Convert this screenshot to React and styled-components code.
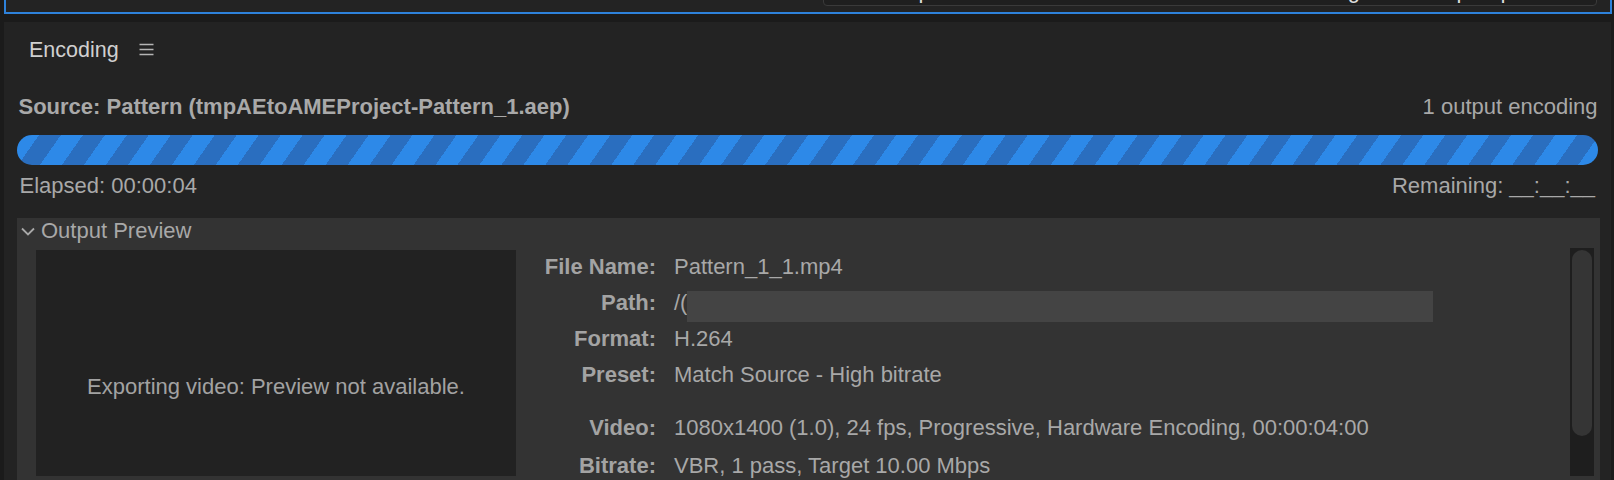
import React from 'react'
import styled, { createGlobalStyle } from 'styled-components'


const GlobalStyle = createGlobalStyle`
    html, body {
        margin: 0;
        padding: 0;
        background: #1b1b1b;
    }
    body {
        font-family: "Liberation Sans", Arial, sans-serif;
        overflow: hidden;
    }
`


const Screen = styled.div`
    width: 1614px;
    height: 480px;
    overflow: hidden;
    display: flex;
    flex-direction: column;
    gap: 8px;
`


const TopPanel = styled.div`
    flex: none;
    box-sizing: border-box;
    height: 14px;
    margin: 0 2px 0 4px;
    border: 2px solid #2e82db;
    border-top: none;
    background: #232323;
    display: flex;
    justify-content: flex-end;
    align-items: flex-end;
    padding: 0 13px 6px 0;
    overflow: hidden;
`


const PathInput = styled.div`
    flex: none;
    width: 774px;
    height: 32px;
    box-sizing: border-box;
    border: 1px solid #3a3a3a;
    border-radius: 4px;
    background: #1f1f1f;
    color: #dcdcdc;
    font-size: 22px;
    line-height: 26px;
    padding: 0 10px 1.5px 70px;
    display: flex;
    align-items: flex-end;
    white-space: nowrap;
`


const Panel = styled.div`
    flex: 1;
    min-height: 0;
    margin: 0 3px 0 4px;
    background: #232323;
    padding: 0 11px 0 12.5px;
    display: flex;
    flex-direction: column;
`


const Header = styled.div`
    flex: none;
    height: 55px;
    padding-left: 12.5px;
    display: flex;
    align-items: center;
    gap: 20px;
`


const Title = styled.span`
    font-size: 21.5px;
    line-height: 26px;
    color: #d0d0d0;
`


const InfoRow = styled.div`
    flex: none;
    display: flex;
    justify-content: space-between;
    align-items: center;
    margin-top: ${p => p.$top}px;
    padding: ${p => p.$pad};
    font-size: 22px;
    line-height: 26px;
    color: #a8a8a8;
`


const Strong = styled.span`
    font-weight: bold;
    color: #a9a9a9;
`


const Bar = styled.div`
    flex: none;
    margin: 15px 2.5px 0 0;
    height: 30px;
    border-radius: 15px;
    background: repeating-linear-gradient(
        125deg,
        #2d89e8 0px,
        #2d89e8 18px,
        #2a6ebf 18px,
        #2a6ebf 36px
    );
`


const Section = styled.div`
    flex: 1;
    margin-top: 19px;
    background: #333333;
    display: flex;
    flex-direction: column;
`


const SectionHeader = styled.div`
    flex: none;
    height: 26px;
    padding-left: 4.5px;
    display: flex;
    align-items: center;
    gap: 6px;
    font-size: 22px;
    line-height: 26px;
    color: #a8a8a8;
`


const SectionBody = styled.div`
    display: grid;
    grid-template-columns: 480px 1fr 24px;
    align-items: start;
    padding: 4px 6px 0 19.5px;
`


const PreviewBox = styled.div`
    margin-top: 2px;
    height: 226px;
    box-sizing: border-box;
    padding-top: 48px;
    background: #222222;
    display: flex;
    align-items: center;
    justify-content: center;
    font-size: 22px;
    color: #a2a2a2;
`


const Details = styled.div`
    display: flex;
    flex-direction: column;
    padding-top: 0.5px;
`


const Row = styled.div`
    height: 36px;
    display: flex;
    align-items: center;
    margin-top: ${p => p.$space || 0}px;
    font-size: 22px;
    line-height: 26px;
    white-space: nowrap;
`


const Label = styled.span`
    width: 140px;
    flex: none;
    text-align: right;
    font-weight: bold;
    color: #a3a3a3;
`


const Value = styled.span`
    margin-left: 18px;
    display: flex;
    align-items: center;
    color: #a8a8a8;
`


const Redacted = styled.span`
    display: block;
    width: 746px;
    height: 31px;
    margin-top: 8px;
    background: #444444;
`


const Track = styled.div`
    height: 228px;
    background: #1e1e1e;
    padding: 2px;
    box-sizing: border-box;
`


const Thumb = styled.div`
    height: 186px;
    border-radius: 10px;
    background: #353535;
`


const MenuIcon = () => (
    <svg width="15" height="13" viewBox="0 0 15 13">
        <g stroke="#b4b4b4" strokeWidth="1.5">
            <line x1="0.5" y1="1.5" x2="14.5" y2="1.5" />
            <line x1="0.5" y1="6.5" x2="14.5" y2="6.5" />
            <line x1="0.5" y1="11.5" x2="14.5" y2="11.5" />
        </g>
    </svg>
)


const Chevron = () => (
    <svg width="14" height="9" viewBox="0 0 14 9">
        <polyline points="1,1.5 7,7.5 13,1.5" fill="none" stroke="#a8a8a8" strokeWidth="1.8" />
    </svg>
)


const details = [
    { label: 'File Name:', value: 'Pattern_1_1.mp4' },
    { label: 'Path:', value: 'path' },
    { label: 'Format:', value: 'H.264' },
    { label: 'Preset:', value: 'Match Source - High bitrate' },
    { label: 'Video:', value: '1080x1400 (1.0), 24 fps, Progressive, Hardware Encoding, 00:00:04:00', space: 17 },
    { label: 'Bitrate:', value: 'VBR, 1 pass, Target 10.00 Mbps', space: 2 },
]


export default function App() {
    return (
        <React.Fragment>
            <GlobalStyle />
            <Screen>
                <TopPanel>
                    <PathInput>Import Pattern into Media Encoder for rendering in the output queue</PathInput>
                </TopPanel>
                <Panel>
                    <Header>
                        <Title>Encoding</Title>
                        <MenuIcon />
                    </Header>
                    <InfoRow $top={17} $pad="0 2.5px 0 2px">
                        <Strong>Source: Pattern (tmpAEtoAMEProject-Pattern_1.aep)</Strong>
                        <span>1 output encoding</span>
                    </InfoRow>
                    <Bar />
                    <InfoRow $top={8} $pad="0 5px 0 3px">
                        <span>Elapsed: 00:00:04</span>
                        <span>Remaining: __:__:__</span>
                    </InfoRow>
                    <Section>
                        <SectionHeader>
                            <Chevron />
                            <span>Output Preview</span>
                        </SectionHeader>
                        <SectionBody>
                            <PreviewBox>Exporting video: Preview not available.</PreviewBox>
                            <Details>
                                {details.map(d => (
                                    <Row key={d.label} $space={d.space}>
                                        <Label>{d.label}</Label>
                                        {d.value === 'path' ? (
                                            <Value>
                                                /(
                                                <Redacted />
                                            </Value>
                                        ) : (
                                            <Value>{d.value}</Value>
                                        )}
                                    </Row>
                                ))}
                            </Details>
                            <Track>
                                <Thumb />
                            </Track>
                        </SectionBody>
                    </Section>
                </Panel>
            </Screen>
        </React.Fragment>
    )
}
